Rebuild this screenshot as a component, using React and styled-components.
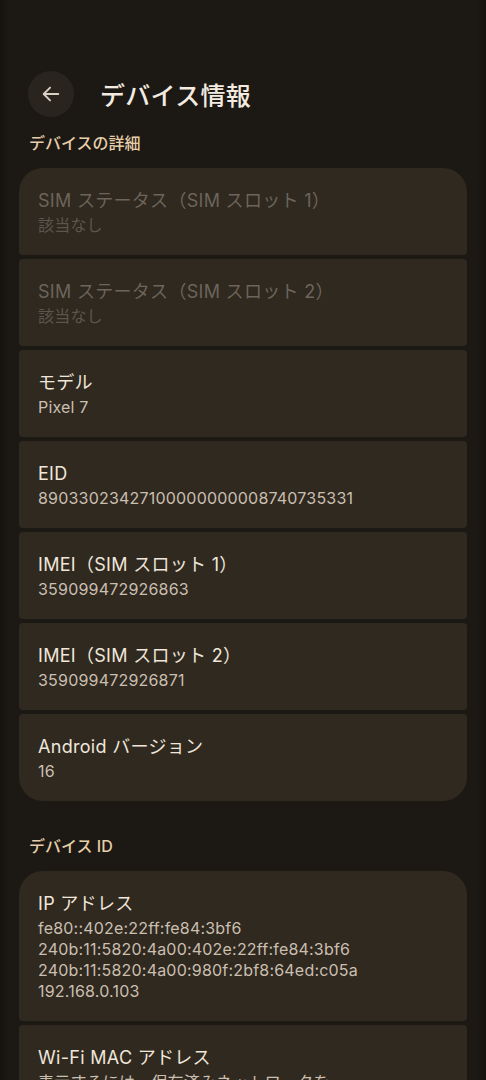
import React from 'react';
import styled, { createGlobalStyle } from 'styled-components';

const GlobalStyle = createGlobalStyle`
  html, body {
    margin: 0;
    padding: 0;
    background: #1c1814;
    overflow: hidden;
  }
  body {
    font-family: Inter, "Noto Sans CJK JP", sans-serif;
    -webkit-font-smoothing: antialiased;
  }
`;

const Screen = styled.div`
  width: 486px;
  height: 1080px;
  overflow: hidden;
  background: linear-gradient(90deg, #15120f 0px, #1c1814 9px, #1c1814 477px, #15120f 486px);
  padding-top: 71px;
  box-sizing: border-box;
`;

const Header = styled.header`
  display: flex;
  align-items: center;
  height: 46px;
  padding-left: 28px;
  gap: 26px;
`;

const BackButton = styled.button`
  width: 46px;
  height: 46px;
  border-radius: 50%;
  border: none;
  background: #2a241e;
  display: flex;
  align-items: center;
  justify-content: center;
  padding: 0;
  color: #d9cfc2;
`;

const Title = styled.h1`
  margin: 0;
  font-size: 25px;
  font-weight: 500;
  color: #f3ebe0;
  letter-spacing: 0.3px;
`;

const SectionLabel = styled.h2`
  margin: ${p => (p.$first ? '16px' : '35px')} 0 15px 29px;
  font-size: 16px;
  line-height: 20px;
  font-weight: 500;
  color: #e6cfa8;
`;

const Group = styled.div`
  display: flex;
  flex-direction: column;
  gap: 4px;
  margin: 0 19px;
`;

const Card = styled.div`
  background: #2f2920;
  border-radius: 4px;
  padding: 21px 19px 19px;
  &:first-child {
    border-top-left-radius: 24px;
    border-top-right-radius: 24px;
  }
  &:last-child {
    border-bottom-left-radius: 24px;
    border-bottom-right-radius: 24px;
  }
`;

const CardTitle = styled.div`
  font-size: 18px;
  line-height: 24px;
  letter-spacing: 0.3px;
  color: ${p => (p.$disabled ? '#6d645a' : '#f0e6da')};
`;

const CardValue = styled.div`
  margin-top: 2px;
  font-size: 16px;
  line-height: 21px;
  letter-spacing: 0.2px;
  color: ${p => (p.$disabled ? '#5e564c' : '#cbbfb0')};
  white-space: pre-line;
`;

const ArrowBack = () => (
  <svg width="22" height="22" viewBox="0 0 24 24" fill="none" stroke="currentColor" strokeWidth="2" strokeLinecap="round" strokeLinejoin="round">
    <path d="M20 12H4.5" />
    <path d="M11 5l-7 7 7 7" />
  </svg>
);

const details = [
  { title: 'SIM ステータス（SIM スロット 1）', value: '該当なし', disabled: true },
  { title: 'SIM ステータス（SIM スロット 2）', value: '該当なし', disabled: true },
  { title: 'モデル', value: 'Pixel 7' },
  { title: 'EID', value: '89033023427100000000008740735331' },
  { title: 'IMEI（SIM スロット 1）', value: '359099472926863' },
  { title: 'IMEI（SIM スロット 2）', value: '359099472926871' },
  { title: 'Android バージョン', value: '16' },
];

const ids = [
  {
    title: 'IP アドレス',
    value: 'fe80::402e:22ff:fe84:3bf6\n240b:11:5820:4a00:402e:22ff:fe84:3bf6\n240b:11:5820:4a00:980f:2bf8:64ed:c05a\n192.168.0.103',
  },
  { title: 'Wi-Fi MAC アドレス', value: '表示するには、保存済みネットワークを\n選択してください' },
];

const Row = ({ item }) => (
  <Card>
    <CardTitle $disabled={item.disabled}>{item.title}</CardTitle>
    <CardValue $disabled={item.disabled}>{item.value}</CardValue>
  </Card>
);

export default function App() {
  return (
    <>
      <GlobalStyle />
      <Screen>
        <Header>
          <BackButton aria-label="戻る">
            <ArrowBack />
          </BackButton>
          <Title>デバイス情報</Title>
        </Header>
        <SectionLabel $first>デバイスの詳細</SectionLabel>
        <Group>
          {details.map(item => <Row key={item.title} item={item} />)}
        </Group>
        <SectionLabel>デバイス ID</SectionLabel>
        <Group>
          {ids.map(item => <Row key={item.title} item={item} />)}
        </Group>
      </Screen>
    </>
  );
}
